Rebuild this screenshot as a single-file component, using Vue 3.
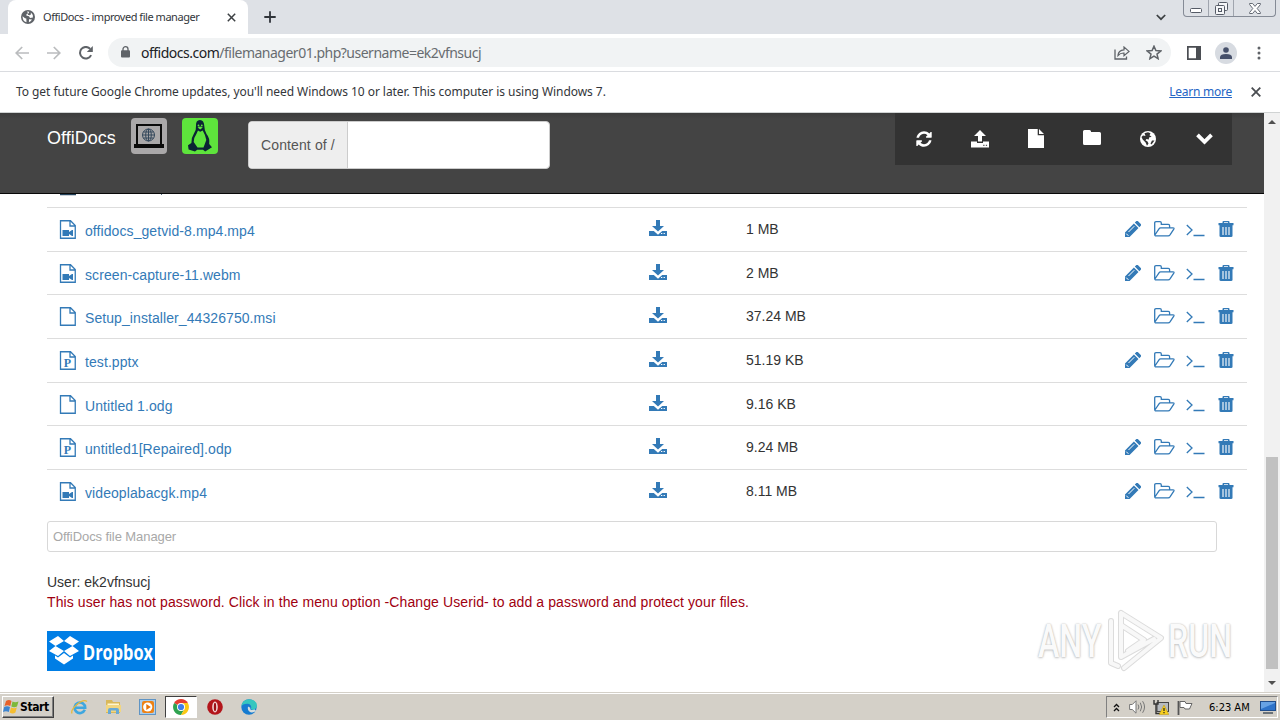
<template>
  <div class="screen">
    <!-- shared icons -->
    <svg class="sprite" width="0" height="0">
      <symbol id="file-video" viewBox="0 0 18 20">
        <path d="M1.5 .75H11.5L16.25 5.5V18.25H1.5Z M11 1V6H16" fill="none" stroke="currentColor" stroke-width="1.3" />
        <path d="M3.500 10h6.500v2l3-2h1v6h-1l-3-2v2H3.500Z" fill="currentColor" />
      </symbol>
      <symbol id="file-blank" viewBox="0 0 18 20">
        <path d="M1.5 .75H11.5L16.25 5.5V18.25H1.5Z M11 1V6H16" fill="none" stroke="currentColor" stroke-width="1.3" />
      </symbol>
      <symbol id="file-ppt" viewBox="0 0 18 20">
        <path d="M1.5 .75H11.5L16.25 5.5V18.25H1.5Z M11 1V6H16" fill="none" stroke="currentColor" stroke-width="1.3" />
        <text x="8.500" y="15.500" text-anchor="middle" font-family="Liberation Serif, serif" font-size="12" font-weight="700" fill="currentColor">P</text>
      </symbol>
      <symbol id="download" viewBox="0 0 18 17">
        <path d="M7 0h4v6h4L9 11.5 3 6h4Z M0 11h4.8L9 14.8 13.2 11H18v5H0Z" fill="currentColor" />
        <path d="M12 13.5h1.3M14.6 13.5h1.3" stroke="#fff" stroke-width="1" />
      </symbol>
      <symbol id="pencil" viewBox="0 0 16 16">
        <path d="M0 16V11.4L8.9 2.5 13.5 7.1 4.6 16Z M9.8 1.6L11.4 0q.7-.4 1.4 0L16 3.2q.4.7 0 1.4L14.4 6.2Z" fill="currentColor" />
        <path d="M3.500 11L9.3 5.2M1.2 12.6l2.2 2.2" stroke="#fff" stroke-width="1" />
      </symbol>
      <symbol id="folder-open" viewBox="0 0 21 16">
        <path d="M.7 13.5V2Q.7.7 2 .7h4Q7.3.7 7.3 2V3.4h7Q15.6 3.4 15.6 4.7V6.8M.9 14 5 7.8Q5.6 6.9 6.6 6.9H19q1.5 0 .8 1.2L16 13.8Q15.3 14.8 14.2 14.8H2Q.7 14.8.7 13.5" fill="none" stroke="currentColor" stroke-width="1.3" />
      </symbol>
      <symbol id="terminal" viewBox="0 0 19 13">
        <path d="M.8 1 6 6 .8 11M7.5 11.500H18.5" fill="none" stroke="currentColor" stroke-width="1.3" />
      </symbol>
      <symbol id="trash" viewBox="0 0 16 17">
        <path d="M4.5 2V1Q4.5 0 5.5 0h5q1 0 1 1V2H15.5V4.2H.5V2ZM6 2h4V1.2H6Z M1.5 4.2h13V15Q14.5 16 13 16H3Q1.5 16 1.5 15Z" fill="currentColor" />
        <path d="M5 6v8M8 6v8M11 6v8" stroke="#fff" stroke-width="1.1" />
      </symbol>
    </svg>

    <!-- tab strip -->
    <div class="tabstrip">
      <div class="tab">
        <svg class="favicon" width="14" height="14" viewBox="0 0 14 14">
          <circle cx="7" cy="7" r="7" fill="#5f6368" />
          <path d="M1.6 6.2 4 8.2 5.3 8.6 5.5 12.3Q1.3 11 1.6 6.2M6 1.6 8.2 1.8 7.6 3.3 5.6 4 5.3 5.4 8 6.3 9 8.1 11.9 7.4Q12 4.2 9.9 2.6L9.8 4.6 8.8 5.3 6.7 4.7 7.2 3.8ZM8 9.3 11 9.5Q9.8 11.6 7.9 12.2Z" fill="#fff" />
        </svg>
        <span class="tab-title">OffiDocs - improved file manager</span>
        <svg class="tab-close" width="9" height="9" viewBox="0 0 9 9"><path d="M.8.8 8.2 8.2M8.2.8.8 8.2" stroke="#3c4043" stroke-width="1.5" /></svg>
      </div>
      <svg class="new-tab" width="12" height="12" viewBox="0 0 12 12"><path d="M6 .3V11.7M.3 6H11.7" stroke="#30343a" stroke-width="1.8" /></svg>
      <svg class="tab-search" width="10" height="7" viewBox="0 0 10 7"><path d="M.8 1 5 5.2 9.2 1" fill="none" stroke="#3c4043" stroke-width="1.7" /></svg>
      <div class="window-buttons">
        <span><svg width="12" height="5" viewBox="0 0 12 5"><rect x=".5" y=".5" width="11" height="4" rx="1" fill="#fff" stroke="#555b66" /></svg></span>
        <span>
          <svg width="13" height="13" viewBox="0 0 13 13" fill="#f5f6f8" stroke="#555b66">
            <rect x="3.5" y=".5" width="9" height="8" rx="1" /><rect x=".5" y="3.5" width="9" height="9" rx="1" /><rect x="3.5" y="6.5" width="3" height="3" />
          </svg>
        </span>
        <span>
          <svg width="12" height="11" viewBox="0 0 12 11"><path d="M.6.5H3.6L6 3.4 8.4.5H11.4V1.5L8.2 5.5 11.4 9.5V10.5H8.4L6 7.6 3.6 10.5H.6V9.5L3.8 5.5.6 1.5Z" fill="#fff" stroke="#555b66" stroke-width=".9" /></svg>
        </span>
      </div>
    </div>

    <!-- address bar -->
    <div class="toolbar">
      <svg class="nav" width="14" height="14" viewBox="0 0 14 14"><path d="M14 7H1.5M7.2 1 1.2 7l6 6" fill="none" stroke="#babcbe" stroke-width="1.7" /></svg>
      <svg class="nav" width="14" height="14" viewBox="0 0 14 14"><path d="M0 7H12.5M6.8 1l6 6-6 6" fill="none" stroke="#babcbe" stroke-width="1.7" /></svg>
      <svg class="nav reload" width="14" height="14" viewBox="0 0 14 14"><path d="M12.1 9.2A5.8 5.8 0 1 1 11.2 2.9" fill="none" stroke="#5f6368" stroke-width="2" /><path d="M13.8 0V6H7.8Z" fill="#5f6368" /></svg>
      <div class="omnibox">
        <svg class="lock" width="9" height="12" viewBox="0 0 9 12"><rect y="4.2" width="9" height="7.3" rx="1" fill="#5f6368" /><path d="M2 5V3a2.5 2.3 0 0 1 5 0V5" fill="none" stroke="#5f6368" stroke-width="1.3" /></svg>
        <span class="url"><b>offidocs.com</b>/filemanager01.php?username=ek2vfnsucj</span>
        <svg class="share" width="16" height="14" viewBox="0 0 16 14"><path d="M1 3.5V13H12.5V10.5" fill="none" stroke="#5f6368" stroke-width="1.3" /><path d="M4 9.5Q4.4 4.2 10 3.9V1l5 4.4-5 4.2V7Q6.3 6.8 4 9.5Z" fill="none" stroke="#5f6368" stroke-width="1.2" /></svg>
        <svg class="star" width="16" height="15" viewBox="0 0 16 15"><path d="M8 1.2 9.9 5.6 14.7 6 11 9.1 12.1 13.7 8 11.2 3.9 13.7 5 9.1 1.3 6 6.1 5.6Z" fill="none" stroke="#5f6368" stroke-width="1.5" /></svg>
      </div>
      <svg class="side-panel" width="14" height="14" viewBox="0 0 14 14"><path d="M0 0H14V14H0ZM1.7 1.7V12.3H9V1.7Z" fill="#4b4e53" fill-rule="evenodd" /></svg>
      <span class="avatar"><svg width="12" height="12" viewBox="0 0 12 12"><circle cx="6" cy="3" r="2.8" fill="#46506a" /><path d="M0 12V10Q.4 7 6 7T12 10V12Z" fill="#46506a" /></svg></span>
      <svg class="kebab" width="4" height="14" viewBox="0 0 4 14" fill="#5f6368"><circle cx="2" cy="2" r="1.5" /><circle cx="2" cy="7" r="1.5" /><circle cx="2" cy="12" r="1.5" /></svg>
    </div>

    <div class="infobar">
      <span class="info-text">To get future Google Chrome updates, you'll need Windows 10 or later. This computer is using Windows 7.</span>
      <a class="learn">Learn more</a>
      <svg width="10" height="10" viewBox="0 0 10 10"><path d="M.7.7 9.3 9.3M9.3.7.7 9.3" stroke="#4a4d51" stroke-width="1.8" /></svg>
    </div>

    <div class="viewport">
      <div class="page">
        <header class="site-header">
          <span class="brand">OffiDocs</span>
          <span class="app-icon laptop">
            <svg width="36" height="36" viewBox="0 0 36 36">
              <rect x="6" y="7" width="24" height="20" fill="none" stroke="#0b0b0b" stroke-width="2" />
              <path d="M3 26H33V30H3Z" fill="#0b0b0b" />
              <g fill="none" stroke="#33475b" stroke-width="1"><circle cx="17.5" cy="17" r="6" /><ellipse cx="17.5" cy="17" rx="2.8" ry="6" /><path d="M11.5 17h12M12.4 14h10.2M12.4 20h10.2M17.5 11v12" /></g>
            </svg>
          </span>
          <span class="app-icon tux">
            <svg width="36" height="36" viewBox="0 0 36 36">
              <path d="M18 2Q13.6 2.2 14 8q.3 4-1.8 7Q9 20 9.4 25L6 27.2 6.6 31.5 13 33.5 15.2 31.8H21L23.2 33.6 30 29.2 27.2 26Q28 20 24.5 16 22.3 12 22.3 8 22 2.2 18 2Z" fill="#0b2434" />
              <path d="M16 12.5 18.2 13.8 20.7 12.5Q23.5 17 24.3 22L23 25.5 21.5 29.5H15.5L11.7 24Q11.8 19.5 14.4 16Z" fill="#5ee43c" />
              <path d="M15.7 9.6 18 8.6 20.8 9.6 18.2 11.4Z" fill="#5ee43c" />
              <circle cx="16.5" cy="7.5" r=".9" fill="#5ee43c" /><circle cx="19.8" cy="7.5" r=".9" fill="#5ee43c" />
            </svg>
          </span>
          <div class="path-group">
            <span class="addon">Content of /</span>
            <span class="field"></span>
          </div>
          <nav class="menu">
            <span>
              <svg width="18" height="18" viewBox="0 0 1792 1792"><path fill="#fff" d="M1639 1056q0 5-1 7-64 268-268 434.500t-478 166.500q-146 0-282.500-55t-243.500-157l-129 129q-19 19-45 19t-45-19-19-45v-448q0-26 19-45t45-19h448q26 0 45 19t19 45-19 45l-137 137q71 66 161 102t187 36q134 0 250-65t186-179q11-17 53-117 8-23 30-23h192q13 0 22.500 9.500t9.500 22.500zm25-800v448q0 26-19 45t-45 19h-448q-26 0-45-19t-19-45 19-45l138-138q-148-137-349-137-134 0-250 65t-186 179q-11 17-53 117-8 23-30 23h-199q-13 0-22.500-9.500t-9.500-22.500v-7q65-268 270-434.500t480-166.500q146 0 284 55.500t245 156.500l130-129q19-19 45-19t45 19 19 45z" /></svg>
            </span>
            <span>
              <svg width="18" height="18" viewBox="0 0 18 18"><path d="M9 0 15 6H11V11.500H7V6H3Z M0 11.500H6V13H12V11.500H18V17.500H0Z" fill="#fff" /><path d="M12.200 15.300h1.300M14.800 15.300h1.300" stroke="#333" /></svg>
            </span>
            <span>
              <svg width="16" height="19" viewBox="0 0 16 19"><path d="M0 0H9.700V6.200H16V19H0Z M11 0 16 5H11Z" fill="#fff" /></svg>
            </span>
            <span>
              <svg class="up" width="18" height="15" viewBox="0 0 18 15"><path d="M0 1.500Q0 0 1.500 0H6.500Q8 0 8 1.500V2H16.500Q18 2 18 3.500V13.500Q18 15 16.500 15H1.500Q0 15 0 13.500Z" fill="#fff" /></svg>
            </span>
            <span>
              <svg width="16" height="16" viewBox="0 0 16 16"><circle cx="8" cy="8" r="8" fill="#fff" /><path d="M4.500 2.200 8 1.300 10.500 2.300 9.500 4.200 11.600 5.800 9 6.600 8.800 8.500 6.500 8 5.500 9.300 7.500 10.600 8.500 12.500 7 14.800 5.600 11.500 2.700 8.600 1.500 6 3 4.600 5.500 5ZM12 9.500 14.500 9.600 11.500 13.600 10.500 12.500Z" fill="#333" /></svg>
            </span>
            <span>
              <svg width="17" height="12" viewBox="0 0 17 12"><path d="M1.500 1.800 8.500 8.800 15.500 1.800" fill="none" stroke="#fff" stroke-width="3.800" /></svg>
            </span>
          </nav>
        </header>

        <main class="content">
          <!-- tail of the row that is scrolled under the header -->
          <div class="row-tail"><svg width="110" height="2" viewBox="0 0 110 2"><path d="M1 .5H17M102 0h1" stroke="#24425b" stroke-width="1.500" /></svg></div>
          <div v-for="file in files" :key="file.name" class="row">
            <div class="name">
              <svg width="18" height="20"><use :href="'#file-' + file.type" /></svg>
              <a>{{ file.name }}</a>
            </div>
            <svg class="download" width="18" height="17"><use href="#download" /></svg>
            <span class="size">{{ file.size }}</span>
            <div class="actions">
              <svg v-if="file.editable" width="16" height="16"><use href="#pencil" /></svg>
              <svg width="21" height="16"><use href="#folder-open" /></svg>
              <svg class="term" width="19" height="13"><use href="#terminal" /></svg>
              <svg width="16" height="17"><use href="#trash" /></svg>
            </div>
          </div>

          <div class="filter">OffiDocs file Manager</div>
          <p class="user">User: ek2vfnsucj</p>
          <p class="warning">This user has not password. Click in the menu option -Change Userid- to add a password and protect your files.</p>

          <div class="dropbox">
            <svg width="30" height="30" viewBox="0 0 30 30" fill="#fff">
              <path d="M9 0 15 5 6.500 10 0 5.500ZM21 0 30 5.500 23.500 10 15 5ZM0 15 6.500 10 15 15 9 20ZM30 15 23.500 10 15 15 21 20ZM6 19.500 9 21.500 15 17 21 21.500 24 19.500V22.500L15 28.500 6 22.500Z" />
            </svg>
            <span>Dropbox</span>
          </div>
        </main>

        <div class="watermark">
          <span class="any">ANY</span>
          <svg width="58" height="64" viewBox="0 0 58 64" fill="none" stroke-linejoin="round" stroke-linecap="round">
            <g stroke="#dcdcdc" stroke-width="6"><path d="M13 4 53 29 16 59M13 4V48L46 30M3 12V54L10 57M13 16 36 31 20 42" /></g>
            <g stroke="#f8f8f8" stroke-width="4"><path d="M13 4 53 29 16 59M13 4V48L46 30M3 12V54L10 57M13 16 36 31 20 42" /></g>
          </svg>
          <span class="run">RUN</span>
        </div>
      </div>
      <div class="scrollbar">
        <svg width="8" height="4" viewBox="0 0 8 4"><path d="M4 0 8 4H0Z" fill="#505050" /></svg>
        <div class="thumb"></div>
        <svg width="8" height="4" viewBox="0 0 8 4"><path d="M4 4 8 0H0Z" fill="#505050" /></svg>
      </div>
    </div>

    <!-- windows taskbar -->
    <div class="taskbar">
      <div class="start">
        <svg width="17" height="16" viewBox="0 0 17 16">
          <path d="M3 2Q6 .2 8.500 2L7.300 7Q4.500 5.600 1.500 7Z" fill="#e8622a" /><path d="M9.500 2.400Q12 3.800 15.500 2.500L14 7.500Q11 9 8.300 7.400Z" fill="#7db83a" />
          <path d="M1.200 8Q4 6.600 7 8L5.800 13Q3 11.300 0 13Z" fill="#3d85d0" /><path d="M8 8.500Q11 10 13.800 8.600L12.400 13.500Q9.600 15.300 6.700 13.400Z" fill="#f5bd2f" />
        </svg>
        <b>Start</b>
      </div>
      <div class="launch">
        <span>
          <svg width="17" height="17" viewBox="0 0 17 17"><path d="M13.800 10.800A5.300 5.300 0 1 1 14.200 8.800H4" fill="none" stroke="#3fa7df" stroke-width="2.600" /><path d="M1 14.500Q-.5 11 6 5.500T16 2.500" fill="none" stroke="#e6b93c" stroke-width="1.300" /></svg>
        </span>
        <span>
          <svg width="17" height="16" viewBox="0 0 17 16"><path d="M1 1H7L8 3H15V14H1Z" fill="#d9b85a" /><path d="M2.500 4.500H14V7H2.500Z" fill="#fff6cf" /><path d="M1 6H16V13H1Z" fill="#f2d680" /><path d="M3 15V11Q3 9 5 9H12Q14 9 14 11V15H11V11.500H6V15Z" fill="#68a9d5" /></svg>
        </span>
        <span>
          <svg width="17" height="17" viewBox="0 0 17 17"><rect x=".5" y=".5" width="16" height="15" fill="#a9cdec" stroke="#5f94c4" /><rect x="3" y="2" width="12" height="12" rx="2" fill="#ee8215" /><circle cx="8.700" cy="8" r="4.600" fill="#fff" /><path d="M7.300 5 11.800 8 7.300 11Z" fill="#e97408" /></svg>
        </span>
        <span class="active">
          <svg width="16" height="16" viewBox="0 0 16 16"><path d="M8 8 1.100 4A8 8 0 0 1 14.900 4Z" fill="#e53e31" /><path d="M8 8 1.100 4A8 8 0 0 0 8 16L11.500 10Z" fill="#2fa350" /><path d="M8 8 8 4H14.900A8 8 0 0 1 8 16L11.500 10Z" fill="#fbc815" /><circle cx="8" cy="8" r="4" fill="#fff" /><circle cx="8" cy="8" r="3.100" fill="#3f7fea" /></svg>
        </span>
        <span>
          <svg width="16" height="16" viewBox="0 0 16 16"><circle cx="8" cy="8" r="7.800" fill="#b3151b" /><ellipse cx="8" cy="8" rx="2.800" ry="5.400" fill="#f3d9d9" /><ellipse cx="8" cy="8" rx="1.200" ry="4.300" fill="#9c0f15" /></svg>
        </span>
        <span>
          <svg width="17" height="16" viewBox="0 0 17 16"><circle cx="8" cy="8" r="7.700" fill="#167bd0" /><path d="M.4 7Q1.500.3 8.500.3 15.700 1 16 7 15.500 10.800 11.500 10.700 9.300 10.400 10.300 8.700 10.200 5 6.500 4.700 2.500 4.500.4 7Z" fill="#35c6bf" /><path d="M7 7.500Q6 11.500 9.500 13.300 12.500 14 15 12L13.800 10.600Q8.500 12 9.300 8.700Z" fill="#d5ddde" /></svg>
        </span>
      </div>
      <div class="tray">
        <svg width="7" height="9" viewBox="0 0 7 9"><path d="M1 4 3.500 1.500 6 4M1 8 3.500 5.500 6 8" fill="none" stroke="#111" stroke-width="1.300" /></svg>
        <svg class="sound" width="17" height="14" viewBox="0 0 17 14"><path d="M.6 4.500H3.300L7 .8V13.200L3.300 9.500H.6Z" fill="#fff" stroke="#777" /><path d="M9 4.500Q10.800 7 9 9.500M11.300 2.700Q14 7 11.300 11.300M13.600 1.200Q17.500 7 13.600 12.800" fill="none" stroke="#777" stroke-width="1" /></svg>
        <svg class="net" width="16" height="15" viewBox="0 0 16 15"><rect x="4" y="2.500" width="11.500" height="9" fill="#b7bbc0" stroke="#444" /><path d="M1 0V4H5V0M3 4V13.500H7" fill="none" stroke="#333" stroke-width="1.400" /><path d="M11 5 15.800 14.500H6.200Z" fill="#f8cf1e" stroke="#b8930a" stroke-width=".5" /><path d="M11 8v3M11 12v1.300" stroke="#222" stroke-width="1.200" /></svg>
        <svg class="flag" width="16" height="15" viewBox="0 0 16 15"><path d="M1.500 15V1" stroke="#555" stroke-width="1.800" /><path d="M3 1.500H8L9 3.500H15L12.500 9H8L7 7.500H3Z" fill="#fff" stroke="#666" /></svg>
        <span class="clock">6:23 AM</span>
        <svg class="desktop" width="16" height="13" viewBox="0 0 16 13"><rect x=".5" y=".5" width="15" height="9" fill="#2e73c9" stroke="#204d8b" /><path d="M1 8 15 2V1H1Z" fill="#67a2e4" /><path d="M3 12H13" stroke="#48535e" stroke-width="1.500" /></svg>
      </div>
    </div>
  </div>
</template>

<script setup>
import { ref } from 'vue'

const files = ref([
  { name: 'offidocs_getvid-8.mp4.mp4', type: 'video', size: '1 MB', editable: true },
  { name: 'screen-capture-11.webm', type: 'video', size: '2 MB', editable: true },
  { name: 'Setup_installer_44326750.msi', type: 'blank', size: '37.24 MB', editable: false },
  { name: 'test.pptx', type: 'ppt', size: '51.19 KB', editable: true },
  { name: 'Untitled 1.odg', type: 'blank', size: '9.16 KB', editable: false },
  { name: 'untitled1[Repaired].odp', type: 'ppt', size: '9.24 MB', editable: true },
  { name: 'videoplabacgk.mp4', type: 'video', size: '8.11 MB', editable: true }
])
</script>

<style>
body {
  margin: 0;
  overflow: hidden;
}
</style>

<style scoped>
.screen {
  width: 1280px;
  height: 720px;
  display: flex;
  flex-direction: column;
  overflow: hidden;
  background: #fff;
  color: #333;
  font-family: "Liberation Sans", Arial, sans-serif;
  font-size: 14px;
}

.sprite {
  position: absolute;
}

svg {
  display: block;
  flex: none;
}

.screen span,
.screen a,
.screen p {
  white-space: nowrap;
}

/* browser chrome */
.tabstrip {
  height: 34px;
  flex: none;
  display: flex;
  align-items: center;
  background: #dee1e6;
  padding-left: 8px;
}

.tab {
  width: 240px;
  height: 34px;
  box-sizing: border-box;
  padding: 0 12px 0 13px;
  display: flex;
  align-items: center;
  background: #fff;
  border-radius: 8px 8px 0 0;
}

.tab-title {
  flex: 1;
  margin-left: 8px;
  padding-bottom: 2px;
  font: 11px "Noto Sans", sans-serif;
  letter-spacing: -0.46px;
  color: #33363a;
}

.new-tab {
  margin-left: 16px;
}

.tab-search {
  margin-left: auto;
}

.window-buttons {
  align-self: flex-start;
  height: 17px;
  box-sizing: border-box;
  display: flex;
  margin: 0 4px 0 17px;
  border: 1px solid #858b96;
  border-top: 0;
  border-radius: 0 0 4px 4px;
}

.window-buttons span {
  width: 24px;
  display: flex;
  align-items: center;
  justify-content: center;
  border-right: 1px solid #a0a5ae;
}

.window-buttons span:first-child {
  align-items: flex-end;
  padding-bottom: 3px;
  box-sizing: border-box;
  width: 25px;
}

.window-buttons span:last-child {
  width: 41px;
  border-right: 0;
}

.toolbar {
  height: 37px;
  flex: none;
  display: flex;
  align-items: center;
  padding-left: 15px;
  border-bottom: 1px solid #dadce0;
}

.nav {
  margin-right: 18px;
}

.reload {
  margin-right: 15px;
}

.omnibox {
  width: 1063px;
  height: 29px;
  box-sizing: border-box;
  padding: 0 9px 0 13px;
  display: flex;
  align-items: center;
  border-radius: 15px;
  background: #f1f3f4;
}

.lock {
  margin-bottom: 2px;
}

.url {
  margin-left: 11px;
  font: 14px "Noto Sans", sans-serif;
  letter-spacing: -0.5px;
  color: #686c70;
}

.url b {
  font-weight: 400;
  color: #202124;
}

.share {
  margin-left: auto;
  margin-right: 16px;
}

.side-panel {
  margin-left: 16px;
}

.avatar {
  width: 22px;
  height: 22px;
  margin: 0 20px 0 14px;
  display: flex;
  align-items: center;
  justify-content: center;
  border-radius: 50%;
  background: #d7dbe1;
}

.infobar {
  height: 40px;
  flex: none;
  display: flex;
  align-items: center;
  padding: 0 19px 0 16px;
  border-bottom: 1px solid #d0d3d3;
  font: 12px "Noto Sans", sans-serif;
  color: #33363a;
}

.info-text {
  padding-bottom: 2px;
  letter-spacing: -0.055px;
}

.learn {
  margin-left: auto;
  margin-right: 19px;
  padding-bottom: 2px;
  letter-spacing: -0.25px;
  color: #2465c5;
  text-decoration: underline;
}

/* page */
.viewport {
  height: 579px;
  flex: none;
  display: flex;
}

.page {
  position: relative;
  width: 1264px;
  overflow: hidden;
}

.site-header {
  height: 81px;
  box-sizing: border-box;
  padding: 0 32px 0 47px;
  display: flex;
  align-items: flex-start;
  background: linear-gradient(#3c3c3c, #444 6px);
  border-bottom: 1px solid #080808;
}

.brand {
  width: 84px;
  padding-top: 15px;
  font-size: 18px;
  line-height: 21px;
  color: #fff;
}

.app-icon {
  width: 36px;
  height: 36px;
  margin-top: 5px;
  border-radius: 4px;
}

.laptop {
  background: #aaa8a9;
  margin-right: 15px;
}

.tux {
  background: #5ee43c;
}

.path-group {
  width: 302px;
  height: 48px;
  margin: 8px 0 0 30px;
  box-sizing: border-box;
  display: flex;
  border: 1px solid #ccc;
  border-radius: 4px;
  background: #fff;
  overflow: hidden;
}

.addon {
  width: 99px;
  padding-left: 12px;
  box-sizing: border-box;
  line-height: 47px;
  letter-spacing: 0.12px;
  background: #eee;
  border-right: 1px solid #ccc;
  color: #555;
}

.menu {
  width: 337px;
  height: 52px;
  margin-left: auto;
  display: flex;
  background: #333;
}

.menu span {
  flex: 1;
  height: 51px;
  padding-left: 1px;
  display: flex;
  align-items: center;
  justify-content: center;
}

.menu .up {
  margin-bottom: 2px;
}

.content {
  padding-left: 47px;
}

.row-tail {
  height: 13px;
  padding-left: 12px;
}

.row {
  width: 1200px;
  height: 43.67px;
  box-sizing: border-box;
  border-top: 1px solid #ddd;
  display: grid;
  grid-template-columns: 602px 97px 300px 1fr;
  align-items: start;
  color: #337ab7;
}

.name {
  display: flex;
  padding: 12px 0 0 12px;
}

.name a {
  margin-left: 8px;
  padding-top: 3px;
  line-height: 17px;
  letter-spacing: 0.08px;
}

.download {
  margin-top: 12px;
}

.size {
  padding-top: 13px;
  line-height: 17px;
  color: #333;
}

.actions {
  display: flex;
  justify-content: flex-end;
  padding: 13px 13.5px 0 0;
  gap: 12.5px;
}

.actions .term {
  margin-top: 3px;
  margin-left: -1px;
}

.filter {
  width: 1170px;
  height: 31px;
  margin-top: 8px;
  padding-left: 5px;
  box-sizing: border-box;
  border: 1px solid #d8d8d8;
  border-radius: 3px;
  font-size: 13px;
  line-height: 29px;
  letter-spacing: -0.08px;
  color: #a8a8a8;
}

.user {
  margin: 20px 0 0;
  line-height: 20px;
}

.warning {
  margin: 0;
  line-height: 20px;
  letter-spacing: 0.1px;
  color: #a00010;
}

.dropbox {
  width: 108px;
  height: 40px;
  margin-top: 19px;
  display: flex;
  align-items: center;
  background: #007ee5;
  color: #fff;
}

.dropbox svg {
  margin: 0 4px 0 2px;
}

.dropbox span {
  display: block;
  font: 700 22px "Open Sans", sans-serif;
  transform: scaleX(0.745);
  transform-origin: left;
}

.watermark {
  position: absolute;
  left: 1038px;
  top: 496px;
  display: flex;
  align-items: center;
  color: #fafafa;
  text-shadow: 0 0 2px #b4b4b4, 0 1px 3px #ccc;
  font-family: Roboto, sans-serif;
  font-size: 46px;
  font-weight: 500;
}

.watermark .any,
.watermark .run {
  display: block;
  width: 65px;
  transform: scaleX(0.7);
  transform-origin: left;
}

.watermark svg {
  margin: 0 2px 0 5px;
}

.scrollbar {
  width: 16px;
  display: flex;
  flex-direction: column;
  align-items: center;
  background: #f1f1f1;
  padding: 7px 0;
  box-sizing: border-box;
}

.thumb {
  width: 12px;
  height: 212px;
  margin: auto 0 12px;
  background: #c1c1c1;
}

/* taskbar */
.taskbar {
  height: 28px;
  flex: none;
  box-sizing: border-box;
  border-top: 1px solid #d4d0c8;
  box-shadow: inset 0 1px #fff;
  background: #d4d0c8;
  display: flex;
  align-items: center;
  padding: 1px 2px 0;
  color: #000;
}

.start {
  width: 52px;
  height: 22px;
  box-sizing: border-box;
  display: flex;
  align-items: center;
  border: 1px solid;
  border-color: #fff #404040 #404040 #fff;
  box-shadow: inset -1px -1px #808080;
}

.start b {
  font: 700 12px "DejaVu Sans Condensed", "DejaVu Sans", sans-serif;
  letter-spacing: -0.4px;
}

.launch {
  display: flex;
  margin-left: 8px;
}

.launch span {
  width: 34px;
  height: 22px;
  display: flex;
  align-items: center;
  justify-content: center;
}

.launch .active {
  width: 32px;
  margin: 0 1px;
  box-sizing: border-box;
  background: #fff;
  border: 1px solid;
  border-color: #404040 #fff #fff #404040;
}

.tray {
  width: 172px;
  height: 22px;
  margin-left: auto;
  box-sizing: border-box;
  padding-left: 6px;
  display: flex;
  align-items: center;
  border: 1px solid;
  border-color: #808080 #fff #fff #808080;
}

.sound {
  margin-left: 9px;
}

.net {
  margin-left: 7px;
}

.flag {
  margin-left: 8px;
}

.clock {
  flex: 1;
  margin-left: 16px;
  font: 11px "DejaVu Sans Condensed", "DejaVu Sans", sans-serif;
}

.desktop {
  margin-right: 1px;
}
</style>
